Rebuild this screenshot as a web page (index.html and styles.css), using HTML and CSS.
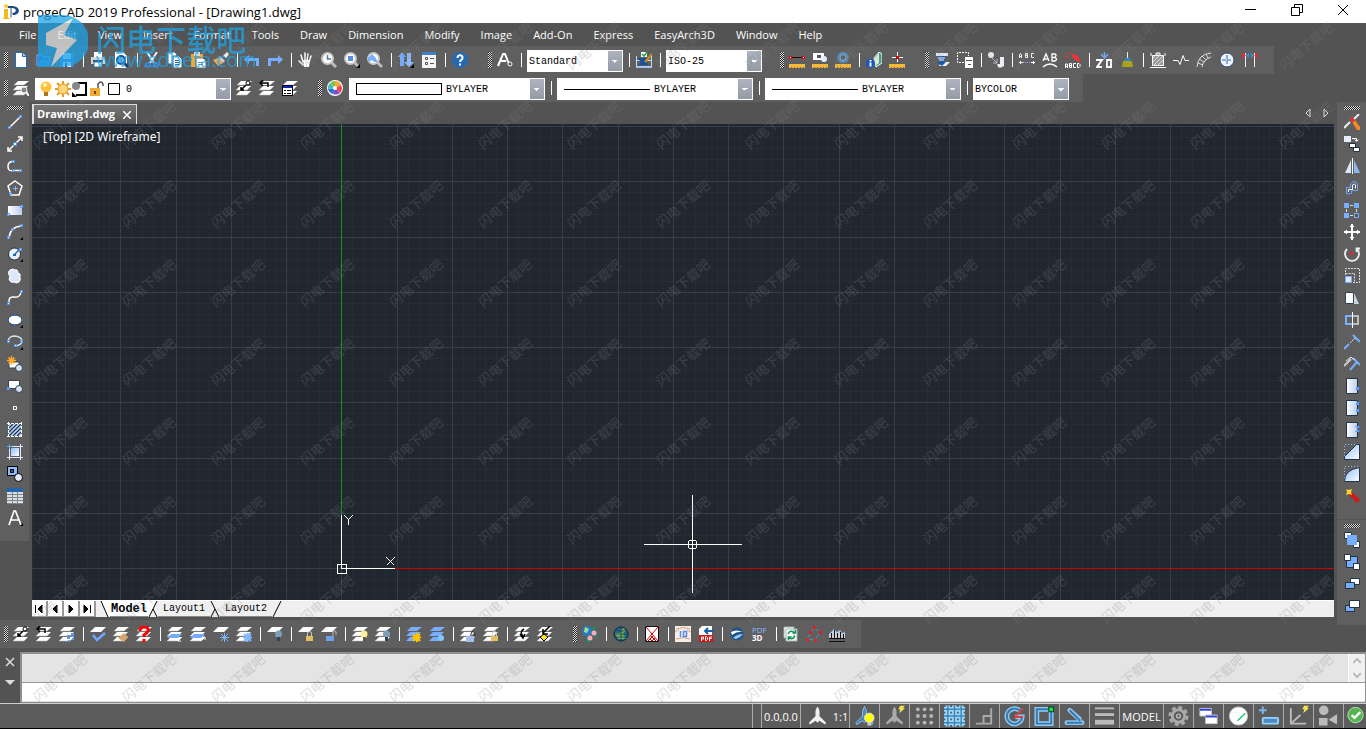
FILE: index.html
```html
<!DOCTYPE html>
<html lang="en">
<head>
  <meta charset="UTF-8">
  <meta name="viewport" content="width=device-width, initial-scale=1.0">
  <title>progeCAD 2019 Professional</title>
  <link rel="stylesheet" href="styles.css">
</head>
<body>
  <!-- Shared icon parts -->
  <svg class="sprite" aria-hidden="true">
    <defs>
      <linearGradient id="fade" x1="0" y1="0" x2="1" y2="1"><stop offset="0" stop-color="#8fbcff"/><stop offset="1" stop-color="#fff"/></linearGradient>
      <linearGradient id="pale" x1="0" y1="0" x2="1" y2="0"><stop offset="0" stop-color="#fff"/><stop offset="1" stop-color="#b9cdf0"/></linearGradient>
    </defs>
    <symbol id="layers" viewBox="0 0 16 16"><path d="M5 1h11l-5 4H1zM4 6h11l-4 4H0zM4 11h11l-4 4H0z" fill="#fff"/><path d="M1 5h10M0 10h11M0 15h11" fill="none" stroke="#bbb" stroke-width=".6"/></symbol>
    <symbol id="layer" viewBox="0 0 16 16"><path d="M5 1h11l-5 5H0z" fill="#fff"/></symbol>
    <symbol id="bulb" viewBox="0 0 16 16"><circle cx="11.500" cy="8" r="3.500" fill="#7c9fb8"/><path d="M10 11h3v4h-3z" fill="#345"/></symbol>
    <symbol id="lock" viewBox="0 0 16 16"><path d="M9.500 10V7.500a2 2 0 0 1 4 0V10" fill="none" stroke="#ccc"/><path d="M8 10h7v5H8z" fill="#e5bd62"/></symbol>
    <symbol id="ruler" viewBox="0 0 16 16"><path d="M0 12h16v4H0z" fill="#f6b838"/><path d="M2.500 15v1M5.500 15v1M8.500 15v1M11.500 15v1M14.500 15v1" stroke="#765"/></symbol>
    <symbol id="person" viewBox="0 0 22 22"><path d="M11 1q3 4 2 10l7 7-1 2-6-4-2 2-2-2-6 4-1-2 7-7Q8 5 11 1z"/></symbol>
    <symbol id="zoomglass" viewBox="0 0 16 16"><path d="M10 10l5 5" stroke="#bbb" stroke-width="3"/><circle cx="6.500" cy="6.500" r="5.500" fill="#fff" stroke="#c8c8c8" stroke-width="2"/></symbol>
    <symbol id="bolt" viewBox="0 0 22 22"><path d="M17 0h5l-2 3h2l-6 5 1-4h-2z" fill="#f5e14b"/></symbol>
  </svg>

  <header class="titlebar">
    <svg class="app-icon" viewBox="0 0 16 16"><path d="M4 2h5c9 0 9 9 1 9l-1-2c5 0 5-5 0-5H5z" fill="#1f4a8a"/><path d="M7 4v10l2-1V4z" fill="#9ab"/><circle cx="3" cy="2" r="2" fill="#fc3"/><path d="M1 5h4v9h2v1H0v-1h1z" fill="#f2bb1d"/></svg>
    <h1>progeCAD 2019 Professional - [Drawing1.dwg]</h1>
    <button class="win" title="Minimize"><svg viewBox="0 0 12 12"><path d="M0 5.500h11"/></svg></button>
    <button class="win" title="Restore"><svg viewBox="0 0 12 12"><path d="M.5 3.500h8v8h-8zM3.500 3V.5h8v8H9"/></svg></button>
    <button class="win" title="Close"><svg viewBox="0 0 12 12"><path d="M1 1l10 10M11 1L1 11"/></svg></button>
  </header>

  <nav class="menubar">
    <a href="#">File</a><a href="#">Edit</a><a href="#">View</a><a href="#">Insert</a><a href="#">Format</a><a href="#">Tools</a><a href="#">Draw</a><a href="#">Dimension</a><a href="#">Modify</a><a href="#">Image</a><a href="#">Add-On</a><a href="#">Express</a><a href="#">EasyArch3D</a><a href="#">Window</a><a href="#">Help</a>
  </nav>

  <div class="toolrow">
    <!-- Standard -->
    <div class="toolbar">
      <button title="New"><svg viewBox="0 0 16 16"><path d="M2.500.5h7l4 4v11h-11z" fill="#fff" stroke="#1e6bc0"/><path d="M9.500.5v4h4" fill="#9cf" stroke="#1e6bc0"/></svg></button>
      <button title="Open"><svg viewBox="0 0 16 16"><path d="M1 14V3h4l2 2h6v3" fill="#1e5fae" stroke="#7db4ff"/><path d="M4 8h12l-3 6H1z" fill="#3d86d9"/></svg></button>
      <button title="Save"><svg viewBox="0 0 16 16"><path d="M1 1h14v14H1z" fill="#3e83d8"/><path d="M4 1h8v6H4z" fill="#d9ebff"/><path d="M4 10h8v5H4z" fill="#fff"/><path d="M6 11h2v4H6z" fill="#246"/></svg></button>
      <i class="sep"></i>
      <button title="Print"><svg viewBox="0 0 16 16"><path d="M4 0h8v5H4z" fill="#fff"/><path d="M1 5h14v7H1z" fill="#d6d6d6"/><path d="M3 8h10v2H3z" fill="#235a99"/><path d="M4 10h8v5H4z" fill="#fff" stroke="#379"/></svg></button>
      <button title="Print Preview"><svg viewBox="0 0 16 16"><path d="M2 0h8l4 4v12H2z" fill="#fff"/><path d="M10 10l5 5" stroke="#123f75" stroke-width="3"/><circle cx="8" cy="8" r="4" fill="#69adf0" stroke="#1a528f" stroke-width="2"/></svg></button>
      <i class="sep"></i>
      <button title="Cut"><svg viewBox="0 0 16 16"><path d="M3 0l7 11M13 0L6 11" stroke="#e8f2ff" stroke-width="2"/><circle cx="4" cy="13" r="2" fill="none" stroke="#3e86d8" stroke-width="2"/><circle cx="12" cy="13" r="2" fill="none" stroke="#3e86d8" stroke-width="2"/></svg></button>
      <button title="Copy"><svg viewBox="0 0 16 16"><path d="M1 0h7l2 3v9H1z" fill="#fff" stroke="#368"/><path d="M6 4h6l3 3v9H6z" fill="#fff" stroke="#368"/><path d="M8 8.500h4M8 10.500h5M8 12.500h5" stroke="#368"/></svg></button>
      <button title="Paste"><svg viewBox="0 0 16 16"><path d="M1 2h12v13H1z" fill="#f3a931"/><path d="M4 0h6v4H4z" fill="#ddd"/><path d="M6 6h7l3 3v7H6z" fill="#fff" stroke="#678"/><path d="M8 10.500h5M8 12.500h5" stroke="#69b"/></svg></button>
      <button title="Match Properties"><svg viewBox="0 0 16 16"><path d="M10 4l4-4 2 2-3 4z" fill="#fff"/><path d="M7 4l5 5-2 2-5-5z" fill="#ddd"/><path d="M5 6l5 5-5 3-5-6z" fill="#ecae5b"/></svg></button>
      <i class="sep"></i>
      <button title="Undo"><svg viewBox="0 0 16 16"><path d="M5 3v3h10v8h-3V9H5v3L0 7.500z" fill="#76adff"/></svg></button>
      <button title="Redo"><svg viewBox="0 0 16 16"><path d="M11 3v3H1v8h3V9h7v3l5-4.500z" fill="#76adff"/></svg></button>
      <i class="sep"></i>
      <button title="Pan"><svg viewBox="0 0 16 16"><path d="M5 13L1 9M5 10L3 3M7 9V1M9 9l1-7M11 10l2-6" fill="none" stroke="#fff" stroke-width="1.500" stroke-linecap="round"/><path d="M5 8h7l-1 7H6z" fill="#fff"/></svg></button>
      <button title="Zoom Realtime"><svg viewBox="0 0 16 16"><use href="#zoomglass"/><path d="M6.500 3v4H10" fill="none" stroke="#579" stroke-width="1.500"/></svg></button>
      <button title="Zoom Window"><svg viewBox="0 0 16 16"><use href="#zoomglass"/><path d="M4 4h5v5H4z" fill="#4f8fe6"/><path d="M12 16h4v-4z" fill="#000"/></svg></button>
      <button title="Zoom Previous"><svg viewBox="0 0 16 16"><use href="#zoomglass"/><path d="M1 10V6l4-4 3 3 3 5H7L5 8z" fill="#76adff"/></svg></button>
      <i class="sep"></i>
      <button title="Named Views"><svg viewBox="0 0 16 16"><path d="M0 5l4-5 4 5H6v9H2V5z" fill="#76adff"/><path d="M9 1h4v9h3l-5 5-5-5h3z" fill="#8dbaff"/><path d="M12 16h4v-4z" fill="#000"/></svg></button>
      <button title="Properties"><svg viewBox="0 0 16 16"><path d="M1 0h14v16H1z" fill="#f4f4f4"/><path d="M1 0h14v3H1z" fill="#3f7fc6"/><path d="M4.500 5.500h2v2h-2zM4.500 10.500h2v2h-2zM9 6.500h4M9 11.500h4" fill="none" stroke="#555"/></svg></button>
      <i class="sep"></i>
      <button title="Help"><svg viewBox="0 0 16 16"><circle cx="8" cy="8" r="8" fill="#2468b4"/><path d="M5.500 6c0-4 5.500-3.500 5 0 0 2-2.500 1.800-2.500 4M8 11.500v2" fill="none" stroke="#fff" stroke-width="2"/></svg></button>
    </div>
    <!-- Styles -->
    <div class="toolbar">
      <button title="Text Style"><svg viewBox="0 0 16 16"><path d="M1 14L6 2h2l4 10M3 9h6" fill="none" stroke="#fff" stroke-width="2"/><circle cx="13" cy="12" r="2" fill="#555" stroke="#fff"/></svg></button>
      <i class="sep"></i>
      <div class="combo small"><select aria-label="Text style"><option>Standard</option></select></div>
      <i class="sep"></i>
      <button title="Dimension Style"><svg viewBox="0 0 16 16"><path d="M5 0h6v5H5z" fill="#fff"/><path d="M6 2l2 2 3-4" fill="none" stroke="#1ca34a" stroke-width="1.500"/><path d="M.5 4v11M15.500 4v11M0 8.500h16" stroke="#cde"/><path d="M1 6h11l-2 4 3 3H2l3-3z" fill="#19519a"/><path d="M9 10l7-8" stroke="#d08d15" stroke-width="2"/><path d="M0 15h16" stroke="#a8c7ee" stroke-width="2"/></svg></button>
      <i class="sep"></i>
      <div class="combo small"><select aria-label="Dimension style"><option>ISO-25</option></select></div>
    </div>
    <!-- Inquiry -->
    <div class="toolbar">
      <button title="Distance"><svg viewBox="0 0 16 16"><use href="#ruler"/><path d="M3 5.500h10" stroke="#300"/><path d="M.5 4.500h2v2h-2zM13.500 4.500h2v2h-2z" fill="#fff" stroke="#d00"/></svg></button>
      <button title="Area"><svg viewBox="0 0 16 16"><use href="#ruler"/><path d="M1 1h11v7H1z" fill="#fff"/><path d="M5 3h4v3H5z" fill="#555"/><circle cx="12" cy="7" r="3" fill="#e3ecfb"/></svg></button>
      <button title="Mass Properties"><svg viewBox="0 0 16 16"><use href="#ruler"/><circle cx="8" cy="5.500" r="4.500" fill="none" stroke="#528cbb" stroke-width="2.500"/><circle cx="8" cy="5.500" r="3" fill="none" stroke="#aad1ef" stroke-width=".7"/></svg></button>
      <i class="sep"></i>
      <button title="Entity Info"><svg viewBox="0 0 16 16"><path d="M8 6l5-6 3 2v9l-6 4z" fill="#5a9977" stroke="#dff"/><path d="M9 6l4-5v10l-4 3z" fill="#d7e9dc"/><circle cx="4.500" cy="11.500" r="4.500" fill="#1b58b9"/><path d="M4.500 8v1.500M4.500 10.500v4" stroke="#fff" stroke-width="2"/></svg></button>
      <button title="Locate Point"><svg viewBox="0 0 16 16"><use href="#ruler"/><path d="M8.500 0v10M3 5.500h11" stroke="#fff"/><path d="M7 4h3v3H7z" fill="#d00"/></svg></button>
    </div>
    <!-- Express -->
    <div class="toolbar">
      <button title="Layer Manager"><svg viewBox="0 0 16 16"><path d="M2 1h12v3H2zM7 10h9l-4 4H5z" fill="#e8f1ff"/><path d="M4 4h8l-2 6h2l-4 4-5-4h3z" fill="#195ba9"/><path d="M4 6h7M5 8h5" stroke="#fff"/></svg></button>
      <button title="Selection Filter"><svg viewBox="0 0 16 16"><path d="M7 10.500H.5v-10h11V4" fill="none" stroke="#fff" stroke-dasharray="2 1"/><path d="M8 5h8v11H8z" fill="#fff"/><path d="M9 8.500h6M11 12.500h3" stroke="#555"/></svg></button>
      <i class="sep"></i>
      <button title="Trace"><svg viewBox="0 0 16 16"><circle cx="3" cy="3" r="3" fill="#e4e4e4"/><path d="M4 6l5 5M9 7v4H5" fill="none" stroke="#bbb"/><path d="M12 5h4v9q-4 3-6 1l-1-3h3z" fill="#e9edf4"/></svg></button>
      <i class="sep"></i>
      <button title="Text Fit"><svg viewBox="0 0 16 16"><path d="M.5 6V3l1-1.500 1 1.500v3M.5 4.500h2M6.500 1.500v4h2v-4zM6.500 3.500h2M15 1.500h-2.500v4H15" fill="none" stroke="#fff"/><path d="M4 10.500h8" stroke="#7fb2ff" stroke-dasharray="1 1"/><path d="M0 10.500h4M1.500 9v3M12 10.500h4M14.500 9v3" stroke="#fff"/></svg></button>
      <button title="Arc Text"><svg viewBox="0 0 16 16"><path d="M1 9l3-7 3 7M2 7h4M10 2v7h3q3-2 0-3.500Q15 2 13 2zM10 5.500h3" fill="none" stroke="#fff" stroke-width="1.300"/><path d="M1 15q7-6 14 0" fill="none" stroke="#fff" stroke-width="1.500"/></svg></button>
      <button title="Explode Text"><svg viewBox="0 0 16 16"><path d="M7 2l5 1 4 6-3 1-6-5z" fill="#e33"/><path d="M1 1l3 2M0 5h4M6 0v2" stroke="#e33"/><path d="M.5 16v-4h2v4M.5 14.500h2M4.500 11.500v4h2v-4zM4.500 13.500h2M11 11.500H8.500v4H11M12.500 11.500v4h1.500l1-1v-2l-1-1z" fill="none" stroke="#fff"/></svg></button>
      <i class="sep"></i>
      <button title="Flatten"><svg viewBox="0 0 16 16"><path d="M0 8h6l-5 7h5M11 8h4v7h-4V8z" fill="none" stroke="#fff" stroke-width="2"/><path d="M8.500 0v6M5 2l3.500 4L12 2" fill="none" stroke="#72a7ee" stroke-width="1.500"/></svg></button>
      <button title="Clean"><svg viewBox="0 0 16 16"><path d="M8.500 0v6" stroke="#eee"/><path d="M6 6h5l1 4H5z" fill="#2d88ca"/><path d="M4 9h9l1 6H3z" fill="#a9a31b"/></svg></button>
      <i class="sep"></i>
      <button title="Super Hatch"><svg viewBox="0 0 16 16"><path d="M2.500 3.500h11v10h-11zM6 3V1h4v2" fill="#999" stroke="#fff"/><path d="M3 6l3-3M3 10l7-7M3 14L13 4M7 14l6-6" stroke="#ddd"/><path d="M0 15.500h16M1 1v3M15 1v3" stroke="#fff"/></svg></button>
      <button title="Break Line"><svg viewBox="0 0 16 16"><path d="M0 8.500h5l2 4 3-9 2 5h4" fill="none" stroke="#fff"/></svg></button>
      <button title="Insulation"><svg viewBox="0 0 16 16"><path d="M1 15Q2 2 15 1M6 15Q7 8 15 5M2 11l5 2M3 7l5 3M6 4l4 4M10 2l2 4" fill="none" stroke="#e6e6e6"/></svg></button>
      <button title="Center Mark"><svg viewBox="0 0 16 16"><circle cx="8" cy="8" r="7" fill="#eaf3ff" stroke="#346"/><path d="M8 3v10M3 8h10" stroke="#346aa8" stroke-dasharray="4 1"/></svg></button>
      <button title="Dimension Break"><svg viewBox="0 0 16 16"><path d="M3.500 1v14M12.500 1v14" stroke="#eee"/><path d="M0 1l4 2.500L0 6zM16 1l-4 2.500L16 6z" fill="#f22"/><path d="M4 3.500L7 1v5zM12 3.500L9 1v5z" fill="#39d"/></svg></button>
    </div>
  </div>

  <div class="toolrow">
    <!-- Layers -->
    <div class="toolbar">
      <button title="Explore Layers"><svg viewBox="0 0 16 16"><use href="#layers"/><circle cx="11" cy="10" r="3" fill="#888" stroke="#eee"/><path d="M13 12l3 4" stroke="#fff" stroke-width="2"/></svg></button>
      <div class="combo large">
        <span class="layer-state">
          <svg viewBox="0 0 16 16"><circle cx="8" cy="6" r="5.500" fill="#ffc33f"/><circle cx="7" cy="4" r="2" fill="#fff3b8"/><path d="M6 11h4v4H6z" fill="#a9781f"/></svg>
          <svg viewBox="0 0 16 16"><path d="M8 0v16M0 8h16M2 2l12 12M14 2L2 14" stroke="#e79b27" stroke-width="2"/><circle cx="8" cy="8" r="5" fill="#ffd57b" stroke="#e79b27"/></svg>
          <svg viewBox="0 0 16 16"><path d="M5 2h9v12H4" fill="#fff" stroke="#000" stroke-width="2"/><circle cx="4" cy="5" r="4" fill="#888"/><path d="M0 16v-5l5 5z" fill="#000"/></svg>
          <svg viewBox="0 0 16 16"><path d="M9 8V3q3-4 5 0v2" fill="none" stroke="#555" stroke-width="1.500"/><path d="M1 7h10v8H1z" fill="#eeae35"/><path d="M6 10v3" stroke="#75480a" stroke-width="2"/></svg>
          <svg viewBox="0 0 16 16"><path d="M2.500 2.500h11v11h-11z" fill="#fff" stroke="#000"/></svg>
        </span>
        <select aria-label="Layer"><option>0</option></select>
      </div>
      <button title="Set Layer by Entity"><svg viewBox="0 0 16 16"><use href="#layers"/><path d="M5 10l5-5M5 7v3h3" fill="none" stroke="#000" stroke-width="1.500"/><circle cx="12" cy="3" r="2" fill="#fff" stroke="#000"/></svg></button>
      <button title="Layer Previous"><svg viewBox="0 0 16 16"><use href="#layers"/><path d="M1 3h8v4M4 0L1 3l3 3" fill="none" stroke="#000" stroke-width="1.500"/></svg></button>
      <button title="Layer States"><svg viewBox="0 0 16 16"><use href="#layers"/><path d="M.5 5.500h10v10H.5z" fill="#fff" stroke="#000"/><path d="M1 6h9v2H1z" fill="#12b"/><path d="M2 10.500h2M5 10.500h4M2 13.500h2M5 13.500h4" stroke="#000"/></svg></button>
    </div>
    <!-- Entity properties -->
    <div class="toolbar">
      <button title="Color"><svg viewBox="0 0 16 16"><circle cx="8" cy="8" r="8" fill="#fff"/><path d="M8 8V1a7 7 0 0 1 6 4z" fill="#f6a53d"/><path d="M8 8l6-3a7 7 0 0 1-1 8z" fill="#e84a4d"/><path d="M8 8l5 5a7 7 0 0 1-7 1z" fill="#864ac2"/><path d="M8 8l-2 6a7 7 0 0 1-5-5z" fill="#2f71da"/><path d="M8 8L1 9a7 7 0 0 1 2-6z" fill="#42c2ae"/><path d="M8 8L3 3a7 7 0 0 1 5-2z" fill="#80c540"/><circle cx="8" cy="8" r="2" fill="#fff"/></svg></button>
      <div class="combo large"><span class="swatch"></span><select aria-label="Color"><option>BYLAYER</option></select></div>
      <i class="sep"></i>
      <div class="combo large"><span class="line"></span><select aria-label="Linetype"><option>BYLAYER</option></select></div>
      <i class="sep"></i>
      <div class="combo large"><span class="line"></span><select aria-label="Lineweight"><option>BYLAYER</option></select></div>
      <i class="sep"></i>
      <div class="combo small"><select aria-label="Print style"><option>BYCOLOR</option></select></div>
    </div>
  </div>

  <main class="workspace">
    <div class="side">
      <!-- Draw -->
      <div class="toolbar vertical">
        <button title="Line"><svg viewBox="0 0 16 16"><path d="M2 14L14 2" stroke="#fff" stroke-width="1.500"/><path d="M1.500 12.500h2v2h-2zM12.500 1.500h2v2h-2z" class="node"/></svg></button>
        <button title="Construction Line"><svg viewBox="0 0 16 16"><path d="M1 15L15 1M1 11v4h4M11 1h4v4" fill="none" stroke="#fff" stroke-width="1.500"/><path d="M6.500 6.500h3v3h-3z" class="node"/></svg></button>
        <button title="Polyline"><svg viewBox="0 0 16 16"><path d="M6 3.500q-5 0-5 5t5 4h7" fill="none" stroke="#fff" stroke-width="1.500"/><path d="M5.500 2.500h2v2h-2zM5.500 11.500h2v2h-2zM12.500 11.500h2v2h-2z" class="node"/></svg></button>
        <button title="Polygon"><svg viewBox="0 0 16 16"><path d="M8 1l7 5-3 9H4L1 6z" fill="none" stroke="#fff" stroke-width="1.500"/><path d="M8.500 6v5M6 8.500h5" stroke="#7db2ff"/><path d="M2.500 12.500h2v2h-2z" class="node"/></svg></button>
        <button title="Rectangle"><svg viewBox="0 0 16 16"><path d="M1 4h14v9H1z" fill="url(#pale)"/><path d="M.5 11.500h2v2h-2zM13.500 3.500h2v2h-2z" class="node"/></svg></button>
        <button title="Arc"><svg viewBox="0 0 16 16"><path d="M2 14Q3 3 14 2" fill="none" stroke="#fff" stroke-width="1.500"/><path d="M.5 12.500h2v2h-2zM4.500 4.500h2v2h-2zM13.500.5h2v2h-2z" class="node"/><path d="M13 16h3v-3z"/></svg></button>
        <button title="Circle"><svg viewBox="0 0 16 16"><circle cx="7.500" cy="8" r="6" fill="#eaf1fb" stroke="#234"/><path d="M7 9l5-5" stroke="#2468b4" stroke-width="1.500"/><path d="M6 8h3v2H6z" fill="#2468b4"/><path d="M12.500 2.500h2v2h-2z" class="node"/><path d="M13 16h3v-3z"/></svg></button>
        <button title="Revision Cloud"><svg viewBox="0 0 16 16"><path d="M3 2q3-2 5 0 3-1 3 3 3 0 2 4 1 3-1 5-3 2-5 0-3 1-4-1-2-2 0-4Q0 4 3 2z" fill="#dce8fa" stroke="#fff"/></svg></button>
        <button title="Spline"><svg viewBox="0 0 16 16"><path d="M2 14q-1-8 5-7t7-5" fill="none" stroke="#fff" stroke-width="1.500"/><path d="M.5 12.500h2v2h-2zM13.500.5h2v2h-2z" class="node"/></svg></button>
        <button title="Ellipse"><svg viewBox="0 0 16 16"><ellipse cx="8" cy="8" rx="7" ry="5" fill="#fff" stroke="#234"/><path d="M0 7h2v2H0zM14 7h2v2h-2zM7 2h2v2H7zM7 12h2v2H7z" fill="#2f76c9"/><path d="M13 16h3v-3z"/></svg></button>
        <button title="Elliptical Arc"><svg viewBox="0 0 16 16"><path d="M1 7q1-5 7-5 7 1 7 5 0 4-7 5" fill="none" stroke="#d7dee8" stroke-width="1.500"/><path d="M.5 6.500h2v2h-2zM13.500 6.500h2v2h-2zM7.500 10.500h2v2h-2z" class="node"/><path d="M13 16h3v-3z"/></svg></button>
        <button title="Make Block"><svg viewBox="0 0 16 16"><path d="M2 6h10v6H2z" fill="#fff" stroke="#345"/><circle cx="12" cy="12" r="3.500" fill="#d6e2f6" stroke="#345"/><path d="M4.500 0v9M0 4.500h9M1.500 1.500l6 6M7.500 1.500l-6 6" stroke="#ffac2e" stroke-width="1.500"/></svg></button>
        <button title="Insert Block"><svg viewBox="0 0 16 16"><path d="M1.500 2.500h11v8h-11z" fill="#fff" stroke="#345"/><circle cx="12" cy="11" r="3.500" fill="#d6e2f6" stroke="#345"/><path d="M0 9h3v3H0z" fill="#5c9bea"/></svg></button>
        <button title="Point"><svg viewBox="0 0 16 16"><path d="M6.500 6.500h3v3h-3z" fill="#666" stroke="#fff"/></svg></button>
        <button title="Hatch"><svg viewBox="0 0 16 16"><path d="M2 2h12v12H2z" fill="#b9d5ff"/><path d="M2 6l4-4M2 10l8-8M2 14L14 2M6 14l8-8M10 14l4-4" stroke="#234" stroke-width="1.200"/><path d="M1.500 0v16M14.500 0v16M0 1.500h16M0 14.500h16" stroke="#fff" stroke-dasharray="3 1"/></svg></button>
        <button title="Boundary"><svg viewBox="0 0 16 16"><path d="M2.500 0v16M13.500 0v16M0 2.500h16M0 13.500h16" stroke="#dfeaff"/><path d="M4 4h8v8H4z" fill="url(#fade)"/><path d="M0 2.500h5M2.500 0v5" fill="none" stroke="#66a7ff"/></svg></button>
        <button title="Region"><svg viewBox="0 0 16 16"><path d="M.5.5h10v9H.5z" fill="#8dbbff" stroke="#000"/><circle cx="11.500" cy="11.500" r="4" fill="#dfeaff" stroke="#000"/><path d="M3.500 3.500h3v3h-3z" fill="#555" stroke="#000"/></svg></button>
        <button title="Table"><svg viewBox="0 0 16 16"><path d="M0 0h16v16H0z" fill="#ddd"/><path d="M0 0h16v4H0z" fill="#2365ac"/><path d="M0 6.500h16M0 9.500h16M0 12.500h16M5.500 4v12M10.500 4v12M0 15.500h16" stroke="#7b8794"/></svg></button>
        <button title="Text"><svg viewBox="0 0 16 16"><path d="M2 15L7 1h1.500L14 15M4 10h8" fill="none" stroke="#fff" stroke-width="1.700"/><path d="M13 16h3v-3z"/></svg></button>
      </div>
    </div>

    <section class="document">
      <div class="doctabs">
        <div class="doctab"><span>Drawing1.dwg</span><button title="Close drawing"><svg viewBox="0 0 8 8"><path d="M0 0l8 8M8 0L0 8" stroke="#fff" stroke-width="1.500"/></svg></button></div>
        <div class="tabscroll">
          <button title="Scroll left"><svg viewBox="0 0 6 10"><path d="M5 1v8L1 5z"/></svg></button>
          <button title="Scroll right"><svg viewBox="0 0 6 10"><path d="M1 1v8l4-4z"/></svg></button>
        </div>
      </div>

      <div class="canvas">
        <svg class="drawing">
          <defs>
            <pattern id="grid" x="88" y="2" width="221" height="221" patternUnits="userSpaceOnUse">
              <path class="minor" d="M11.500 0v221M22.500 0v221M33.500 0v221M44.500 0v221M67.500 0v221M78.500 0v221M89.500 0v221M100.500 0v221M122.500 0v221M133.500 0v221M144.500 0v221M155.500 0v221M177.500 0v221M188.500 0v221M199.500 0v221M210.500 0v221"/>
              <path class="minor" d="M0 11.500h221M0 22.500h221M0 33.500h221M0 44.500h221M0 66.500h221M0 77.500h221M0 88.500h221M0 100.500h221M0 122.500h221M0 133.500h221M0 144.500h221M0 155.500h221M0 177.500h221M0 188.500h221M0 199.500h221M0 210.500h221"/>
              <path class="major" d="M.5 0v221M56.500 0v221M111.500 0v221M166.500 0v221M0 .5h221M0 55.500h221M0 111.500h221M0 166.500h221"/>
            </pattern>
          </defs>
          <rect width="100%" height="100%" fill="url(#grid)"/>
          <!-- Axes and UCS icon -->
          <line class="axis-y" x1="309.500" y1="0" x2="309.500" y2="391"/>
          <line class="axis-x" x1="363" y1="444.500" x2="100%" y2="444.500"/>
          <path class="ucs" d="M309.500 391v53.500H363M305.500 440.500h9v9h-9zM312.500 391.500l4 4 4-4M316.500 395.500v5M354.500 433.500l8 8M362.500 433.500l-8 8"/>
          <!-- Cursor -->
          <path class="ucs" d="M612 420.500h98M660.500 371v98M657.500 416.500h6l1 1v6l-1 1h-6l-1-1v-6z"/>
        </svg>
        <span class="viewlabel">[Top] [2D Wireframe]</span>
      </div>

      <div class="layouts">
        <div class="layoutnav">
          <button title="First"><svg viewBox="0 0 10 10"><path d="M1.500 1v8M8 1v8L4 5z"/></svg></button>
          <button title="Previous"><svg viewBox="0 0 10 10"><path d="M7 1v8L3 5z"/></svg></button>
          <button title="Next"><svg viewBox="0 0 10 10"><path d="M3 1v8l4-4z"/></svg></button>
          <button title="Last"><svg viewBox="0 0 10 10"><path d="M8.500 1v8M2 1v8l4-4z"/></svg></button>
        </div>
        <svg class="slant" viewBox="0 0 10 16"><path d="M1 0h9v16H8z" fill="#fff" stroke="none"/><path d="M1 0l7 16"/></svg>
        <button class="layout active">Model</button>
        <svg class="slant" viewBox="0 0 10 16"><path d="M0 0h9L1 16H0z" fill="#fff" stroke="none"/><path d="M9 0L1 16M5 8l4 8"/></svg>
        <button class="layout">Layout1</button>
        <svg class="slant" viewBox="0 0 10 16"><path d="M1 0l8 16M5 8l-4 8"/></svg>
        <button class="layout">Layout2</button>
        <svg class="slant" viewBox="0 0 10 16"><path d="M9 0L1 16"/></svg>
      </div>
    </section>

    <div class="side right">
      <!-- Modify -->
      <div class="toolbar vertical">
        <button title="Erase"><svg viewBox="0 0 16 16"><path d="M0 14l6-6M10 5l5-5" stroke="#eee" stroke-width="2"/><path d="M8 8l3-2 5 7v3h-3z" fill="#f58a22"/><path d="M5 4l3-1 3 4-3 2z" fill="#d33"/></svg></button>
        <button title="Copy"><svg viewBox="0 0 16 16"><path d="M0 0h7v6H0z" fill="#e5efff"/><path d="M8 2.500h4.500V5M10.500 3.500l2 2 2-2" fill="none" stroke="#fff"/><path d="M5.500 7.500h6v4h-6zM9.500 11.500h6v4h-6z" fill="#fff" stroke="#234"/></svg></button>
        <button title="Mirror"><svg viewBox="0 0 16 16"><path d="M7 2v13H1z" fill="#dce8fb"/><path d="M10 2v13h6z" fill="#8db8f5"/><path d="M8.500 0v16" stroke="#fff"/></svg></button>
        <button title="Offset"><svg viewBox="0 0 16 16"><path d="M2.500 14V7.500h4V4q4-5 7 0v6.500h-6v3z" fill="none" stroke="#6aa6ff"/><path d="M4.500 12V9.500h4V5q2-2 3 0v3.500" fill="none" stroke="#fff"/></svg></button>
        <button title="Array"><svg viewBox="0 0 16 16"><path d="M0 1h5v5H0zM10 1h5v5h-5zM0 11h5v5H0z" fill="#78aeff"/><path d="M10.500 11.500h4v4h-4z" fill="#555" stroke="#78aeff"/><path d="M6 3.500h3M6 13.500h3M2.500 7v3M12.500 7v3" stroke="#ddd"/></svg></button>
        <button title="Move"><svg viewBox="0 0 16 16"><path d="M8 0v16M0 8h16" stroke="#fff" stroke-width="2"/><path d="M8 0l2.500 3h-5zM8 16l2.500-3h-5zM0 8l3-2.500v5zM16 8l-3-2.500v5z" fill="#fff"/></svg></button>
        <button title="Rotate"><svg viewBox="0 0 16 16"><path d="M3 3a7 7 0 1 0 10 0M12.500 6V2.500H16" fill="none" stroke="#eee" stroke-width="1.800"/><path d="M7.500 5v5M5 7.500h5" stroke="#e22"/></svg></button>
        <button title="Scale"><svg viewBox="0 0 16 16"><path d="M1.500 7V.5h14v14H9M1.500 5.500h9v9" fill="none" stroke="#ddd" stroke-dasharray="2 1"/><path d="M1.500 8.500h6v6h-6z" fill="#dce9ff" stroke="#78aeff"/></svg></button>
        <button title="Stretch"><svg viewBox="0 0 16 16"><path d="M1.500 2.500h8v11h-8z" fill="#fff" stroke="#345"/><path d="M10 3l5 11h-5z" fill="#cbd3df"/></svg></button>
        <button title="Trim"><svg viewBox="0 0 16 16"><path d="M8 4H2v8h6" fill="none" stroke="#78aeff" stroke-width="2"/><path d="M9 4h5v8H9" fill="none" stroke="#bbb" stroke-width="2"/><path d="M8.500 0v16" stroke="#fff"/></svg></button>
        <button title="Extend"><svg viewBox="0 0 16 16"><path d="M0 15l5-5M9 1l7 7M11 4l1 1" stroke="#78aeff" stroke-width="2"/><path d="M6 9l5-5" stroke="#eee" stroke-dasharray="2 1"/></svg></button>
        <button title="Lengthen"><svg viewBox="0 0 16 16"><path d="M0 10l7-7" stroke="#ccc" stroke-width="2"/><path d="M6 14l7-8M9 2l7 7" stroke="#78aeff" stroke-width="2"/><path d="M2 5l5-4 3 3" fill="none" stroke="#eee"/></svg></button>
        <button title="Break at Point"><svg viewBox="0 0 16 16"><path d="M2.500.5h11v15h-11z" fill="url(#pale)" stroke="#234"/><path d="M12 9h3v3h-3z" fill="#589dff"/></svg></button>
        <button title="Break"><svg viewBox="0 0 16 16"><path d="M2.500.5h11v15h-11z" fill="url(#pale)" stroke="#234"/><path d="M12 2h3v3h-3zM12 9h3v3h-3z" fill="#589dff"/></svg></button>
        <button title="Join"><svg viewBox="0 0 16 16"><path d="M2.500.5h11v15h-11z" fill="url(#pale)" stroke="#234"/><path d="M11 4h5l-5 6h5z" fill="#589dff"/></svg></button>
        <button title="Chamfer"><svg viewBox="0 0 16 16"><path d="M.5 15V.5H15" fill="none" stroke="#8dbbff" stroke-dasharray="1 2"/><path d="M15.500.5v15H.5v-3l12-12z" fill="url(#fade)" stroke="#234"/></svg></button>
        <button title="Fillet"><svg viewBox="0 0 16 16"><path d="M.5 15V.5H15" fill="none" stroke="#8dbbff" stroke-dasharray="1 2"/><path d="M15.500 1.500v14H.5q0-12 15-14z" fill="url(#fade)" stroke="#234"/></svg></button>
        <button title="Explode"><svg viewBox="0 0 16 16"><path d="M5 7l3-3 8 8-3 3z" fill="#d51717"/><path d="M2 1l2 1 4-1-1 3 1 3-3-1-3 1 1-3z" fill="#ffd42a"/></svg></button>
      </div>
      <!-- Draw order -->
      <div class="toolbar vertical">
        <button title="Bring to Front"><svg viewBox="0 0 16 16"><path d="M.5.5h7v6h-7zM9.500 9.500h6v6h-6z" fill="#fff" stroke="#234"/><path d="M3 3h10v10H3z" fill="#78aeff"/></svg></button>
        <button title="Send to Back"><svg viewBox="0 0 16 16"><path d="M2.500 2.500h11v11h-11z" fill="#78aeff" stroke="#234"/><path d="M.5.5h6v6h-6zM9.500 9.500h6v6h-6z" fill="#fff" stroke="#234"/></svg></button>
        <button title="Bring Above"><svg viewBox="0 0 16 16"><path d="M6.500 2.500h9v6h-9z" fill="#fff" stroke="#234"/><path d="M1.500 6.500h9v6h-9z" fill="#78aeff" stroke="#234"/></svg></button>
        <button title="Send Under"><svg viewBox="0 0 16 16"><path d="M1.500 7.500h9v6h-9z" fill="#78aeff" stroke="#234"/><path d="M5.500 2.500h10v7h-10z" fill="#fff" stroke="#234"/></svg></button>
      </div>
    </div>
  </main>

  <div class="toolrow">
    <!-- Layer tools -->
    <div class="toolbar">
      <button title="Set Layer"><svg viewBox="0 0 16 16"><use href="#layers"/><path d="M5 10l5-5M5 7v3h3" fill="none" stroke="#000" stroke-width="1.500"/><circle cx="12" cy="3" r="2" fill="#fff" stroke="#000"/></svg></button>
      <button title="Layer Previous"><svg viewBox="0 0 16 16"><use href="#layers"/><path d="M1 3h8v4M4 0L1 3l3 3" fill="none" stroke="#000" stroke-width="1.500"/></svg></button>
      <button title="Layer Walk"><svg viewBox="0 0 16 16"><use href="#layers"/><path d="M8 9h3v4H8zM12 7h3v4h-3zM9 14h2v2H9zM13 12h2v2h-2z" fill="#5c96e5"/></svg></button>
      <i class="sep"></i>
      <button title="Make Current"><svg viewBox="0 0 16 16"><use href="#layer"/><path d="M3 9l4 5 8-7" fill="none" stroke="#70a8ff" stroke-width="2.500"/></svg></button>
      <button title="Layer Match"><svg viewBox="0 0 16 16"><use href="#layers"/><path d="M11 7l4 4-4 5-6-4z" fill="#d6a56d"/></svg></button>
      <button title="Identify Layer"><svg viewBox="0 0 16 16"><use href="#layers"/><path d="M4 5q0-4 4-4 5 0 4 4-1 2-4 4v2M8 13v3" fill="none" stroke="#f00" stroke-width="3"/></svg></button>
      <i class="sep"></i>
      <button title="Move to Layer"><svg viewBox="0 0 16 16"><use href="#layers"/><path d="M4 8h11l-4 4H0z" fill="#76acff"/><path d="M15 11l-4 4M11 12v3h3" fill="none" stroke="#fff"/></svg></button>
      <button title="Copy to Layer"><svg viewBox="0 0 16 16"><use href="#layers"/><path d="M4 8h11l-4 4H0z" fill="#76acff"/><path d="M11 15l4-4M12 11h3v3" fill="none" stroke="#fff"/></svg></button>
      <button title="Layer Freeze"><svg viewBox="0 0 16 16"><use href="#layer"/><path d="M11.500 7v9M7 11.500h9M8 8l7 7M15 8l-7 7" stroke="#82b5ff"/></svg></button>
      <button title="Thaw All"><svg viewBox="0 0 16 16"><use href="#layers"/><path d="M11.500 7v9M7 11.500h9M8 8l7 7M15 8l-7 7" stroke="#82baff" stroke-width="2"/></svg></button>
      <i class="sep"></i>
      <button title="Layer Off"><svg viewBox="0 0 16 16"><use href="#layer"/><use href="#bulb"/></svg></button>
      <i class="sep"></i>
      <button title="Layer Lock"><svg viewBox="0 0 16 16"><use href="#layer"/><use href="#lock"/></svg></button>
      <button title="Layer Unlock"><svg viewBox="0 0 16 16"><use href="#layer"/><path d="M12 10V6q2-3 3 0v3" fill="none" stroke="#bbb"/><path d="M5 10h8v5H5z" fill="#6f9fe4"/></svg></button>
      <i class="sep"></i>
      <button title="All Layers On"><svg viewBox="0 0 16 16"><use href="#layers"/><circle cx="12" cy="8" r="3.500" fill="#ffef95"/><path d="M11 11h3v4h-3z" fill="#654"/></svg></button>
      <button title="Layers Off"><svg viewBox="0 0 16 16"><use href="#layers"/><use href="#bulb"/></svg></button>
      <i class="sep"></i>
      <button title="Layer Isolate"><svg viewBox="0 0 16 16"><path d="M5 1h11l-5 4H1zM4 6h11l-4 4H0zM4 11h11l-4 4H0z" fill="#78aeff"/><path d="M11 7v9M6 11.500h9M7 8l7 7M14 8l-7 7" stroke="#ffc400" stroke-width="2"/></svg></button>
      <button title="Layer Unisolate"><svg viewBox="0 0 16 16"><path d="M5 1h11l-5 4H1zM4 6h11l-4 4H0zM4 11h11l-4 4H0z" fill="#78aeff"/><circle cx="12" cy="12" r="3" fill="#84c6ff"/></svg></button>
      <i class="sep"></i>
      <button title="Unlock All"><svg viewBox="0 0 16 16"><use href="#layers"/><path d="M11 10V7q2-3 4 0v3" fill="none" stroke="#333"/><path d="M6 10h8v6H6z" fill="#a4bfeb"/></svg></button>
      <button title="Lock All"><svg viewBox="0 0 16 16"><use href="#layers"/><use href="#lock"/></svg></button>
      <i class="sep"></i>
      <button title="Layer Merge"><svg viewBox="0 0 16 16"><use href="#layers"/><path d="M10 3q-5 3-1 7M6 8l3 4 2-4" fill="none" stroke="#000" stroke-width="1.500"/></svg></button>
      <button title="Layer Delete"><svg viewBox="0 0 16 16"><use href="#layers"/><path d="M13 0L6 7M6 3v5h5" fill="none" stroke="#000" stroke-width="1.500"/><path d="M7 8l4 3-4 4-4-4z" fill="#fd2" stroke="#000"/></svg></button>
    </div>
    <!-- Utilities -->
    <div class="toolbar">
      <button title="Map"><svg viewBox="0 0 16 16"><circle cx="5" cy="5" r="5" fill="#247ac5"/><path d="M3 1l4 2-2 4-3-1z" fill="#a5df83"/><path d="M9 2h3v6M12 10h4M5 11v4h3" fill="none" stroke="#1a8a78" stroke-width="2"/><circle cx="8" cy="12" r="2.500" fill="#f5aeb8"/><circle cx="12" cy="7" r="2.500" fill="#f5aeb8"/></svg></button>
      <i class="sep"></i>
      <button title="Globe"><svg viewBox="0 0 16 16"><circle cx="8" cy="8" r="7" fill="#1f6a86" stroke="#123"/><path d="M2 7h5l3-5 3 2-3 4 3 5H5z" fill="#71a855"/><path d="M8 1v14M1 8h14M3 4q5 3 10 0M3 12q5-3 10 0" fill="none" stroke="#153e5a" stroke-width=".7"/></svg></button>
      <i class="sep"></i>
      <button title="Wipeout"><svg viewBox="0 0 16 16"><path d="M1.500.5h13v15h-13z" fill="#fff" stroke="#111"/><path d="M2 1l6 7 6-7M2 15l6-7 6 7" fill="none" stroke="#d00"/><path d="M4 15l5-5M8 15l3-3M12 15l-5-5M8 15l-2-2" stroke="#d00"/></svg></button>
      <i class="sep"></i>
      <button title="Contours"><svg viewBox="0 0 16 16"><path d="M0 0h16v16H0z" fill="#f7eee8"/><path d="M1 3q7-3 14 0M1 13q7-3 14 0M0 6q3-2 4-2M12 4l4 2" fill="none" stroke="#dba08d"/><path d="M5.500 5v6M8.500 5.500h3v5h-3z" fill="none" stroke="#548ded" stroke-width="1.500"/></svg></button>
      <button title="PDF Import"><svg viewBox="0 0 16 16"><path d="M4 0h10v10H1V3z" fill="#fff"/><path d="M1 9h14v7H1z" fill="#d31717"/><path d="M7 5h9M10 2L7 5l3 3" fill="none" stroke="#1b61ae" stroke-width="2"/><path d="M3.500 15v-4h2v2h-2M7.500 10.500v4h1l1-1v-2l-1-1zM11.500 15v-4H14M11.500 12.500h2" fill="none" stroke="#fff"/></svg></button>
      <i class="sep"></i>
      <button title="Earth"><svg viewBox="0 0 16 16"><circle cx="8" cy="8" r="6.500" fill="#1c538b"/><path d="M2 6q5-3 12 0Q8 5 3 9z" fill="#fff"/><path d="M4 12q4-4 10-4-2 3-7 5z" fill="#9dc9ed"/></svg></button>
      <button class="pdf3d" title="PDF 3D"><span>PDF</span><b>3D</b></button>
      <i class="sep"></i>
      <button title="Update"><svg viewBox="0 0 16 16"><path d="M1 1h10v11H1zM3 3h11v12H3z" fill="#fff" stroke="#a3b2b1"/><path d="M5 8q2-5 7-1M12.500 4v3h-3M12 10q-3 5-7 1M5.500 14v-3h3" fill="none" stroke="#14935d" stroke-width="1.500"/></svg></button>
      <button title="Polyline Edit"><svg viewBox="0 0 16 16"><path d="M1 13L8 2l6 4-5 8z" fill="none" stroke="#568bb0"/><path d="M7.500.5h2v2h-2zM13.500 5.500h2v2h-2zM.5 12.500h2v2h-2zM8.500 13.500h2v2h-2zM3.500 5.500h2v2h-2z" fill="#555" stroke="#f11"/></svg></button>
      <button title="Profile"><svg viewBox="0 0 16 16"><path d="M0 12V8l5-5 3 3 3-2 2 3 3-1v6z" fill="#ccd"/><path d="M0 8l5-5 3 3 3-2 2 3 3-1" fill="none" stroke="#6594ba"/><path d="M2.500 7v6M5.500 4v9M8.500 7v6M11.500 6v7M14.500 8v5M0 12.500h16M0 15.500h16" stroke="#111"/></svg></button>
    </div>
  </div>

  <section class="command">
    <div class="command-tools">
      <button title="Close"><svg viewBox="0 0 10 10"><path d="M1 1l8 8M9 1L1 9" stroke="#ddd" stroke-width="1.500"/></svg></button>
      <button title="Options"><svg viewBox="0 0 10 10"><path d="M0 3h10L5 8z" fill="#ddd"/></svg></button>
    </div>
    <div class="command-box">
      <div class="history">
        <div class="scroller">
          <button title="Scroll up"><svg viewBox="0 0 8 8"><path d="M0 6l4-4 4 4"/></svg></button>
          <button title="Scroll down"><svg viewBox="0 0 8 8"><path d="M0 2l4 4 4-4"/></svg></button>
        </div>
      </div>
      <input type="text" aria-label="Command">
    </div>
  </section>

  <footer class="statusbar">
    <span class="cell narrow"></span>
    <span class="cell coords">0.0,0.0</span>
    <button class="cell scale"><svg viewBox="0 0 22 22"><use href="#person" fill="#eee"/></svg><span>1:1</span></button>
    <button class="cell" title="Annotation Visibility"><svg viewBox="0 0 22 22"><use href="#person" fill="#4f82b5" stroke="#8cc4ee"/><circle cx="16" cy="13" r="5" fill="#ff0" stroke="#dde"/><path d="M14 18h4v3h-4z" fill="#ccc"/></svg></button>
    <button class="cell" title="Annotation Autoscale"><svg viewBox="0 0 22 22"><use href="#person" fill="#aaa"/><use href="#bolt"/></svg></button>
    <button class="cell" title="Snap"><svg viewBox="0 0 22 22"><path d="M4 4h.1M11 4h.1M18 4h.1M4 11h.1M11 11h.1M18 11h.1M4 18h.1M11 18h.1M18 18h.1" stroke="#b5b5b5" stroke-width="4" stroke-linecap="round"/></svg></button>
    <button class="cell" title="Grid"><svg viewBox="0 0 22 22"><path d="M4 0v22M11 0v22M18 0v22M0 4h22M0 11h22M0 18h22" stroke="#9bd7fa" stroke-width="5"/><path d="M4 0v22M11 0v22M18 0v22M0 4h22M0 11h22M0 18h22" stroke="#3d86ba" stroke-width="1.500"/></svg></button>
    <button class="cell" title="Ortho"><svg viewBox="0 0 22 22"><path d="M2 19h16V3M10 19v-8h8" fill="none" stroke="#aaa" stroke-width="2"/></svg></button>
    <button class="cell" title="Polar"><svg viewBox="0 0 22 22"><path d="M16 5A8 8 0 1 0 19 12H12" fill="none" stroke="#8cc9f2" stroke-width="5"/><path d="M16 5A8 8 0 1 0 19 12H12" fill="none" stroke="#3977ad" stroke-width="2"/><path d="M20 12h-8l8-9" fill="none" stroke="#f33" stroke-width="1.500"/></svg></button>
    <button class="cell" title="Object Snap"><svg viewBox="0 0 22 22"><path d="M3 4h15v15H3z" fill="none" stroke="#8ccbf6" stroke-width="5"/><path d="M3 4h15v15H3z" fill="none" stroke="#3977ad" stroke-width="2"/><path d="M15.500 1.500h5v5h-5z" fill="#0e3" stroke="#123"/></svg></button>
    <button class="cell" title="Object Tracking"><svg viewBox="0 0 22 22"><path d="M6 5l10 9v4M3 18h16" fill="none" stroke="#89c5ec" stroke-width="5" stroke-linecap="round"/><path d="M6 5l11 11M3 18h16" fill="none" stroke="#3977ad" stroke-width="2"/></svg></button>
    <button class="cell" title="Lineweight"><svg viewBox="0 0 22 22"><path d="M1 3h20" stroke="#bbb" stroke-width="2"/><path d="M1 9.500h20" stroke="#bbb" stroke-width="3"/><path d="M1 17.500h20" stroke="#bbb" stroke-width="5"/></svg></button>
    <button class="cell model">MODEL</button>
    <button class="cell" title="Workspace"><svg viewBox="0 0 22 22"><circle cx="11" cy="11" r="9" fill="none" stroke="#aaa" stroke-width="3" stroke-dasharray="4 3"/><circle cx="11" cy="11" r="6.500" fill="none" stroke="#aaa" stroke-width="3"/><circle cx="11" cy="11" r="2" fill="none" stroke="#bbb" stroke-width="1.500"/></svg></button>
    <button class="cell" title="Windows"><svg viewBox="0 0 22 22"><path d="M2 3h12v8H2zM8 10h12v9H8z" fill="#fff" stroke="#ccc"/><path d="M2 4.500h12M8 11.500h12" stroke="#34d" stroke-width="2"/></svg></button>
    <button class="cell" title="Performance"><svg viewBox="0 0 22 22"><circle cx="11" cy="11" r="9.500" fill="#fff" stroke="#ccc"/><path d="M10 16l8-8" stroke="#1c7" stroke-width="1.500"/></svg></button>
    <button class="cell" title="Dynamic Input"><svg viewBox="0 0 22 22"><path d="M5 1v8M1 5h8" stroke="#7fb4e5" stroke-width="2"/><rect x="5" y="13" width="16" height="6" rx="1" fill="#4b8ac1" stroke="#91d3fb" stroke-width="2"/></svg></button>
    <button class="cell" title="Dynamic UCS"><svg viewBox="0 0 22 22"><path d="M3 3v16h16M3 19l10-9" fill="none" stroke="#bbb" stroke-width="2"/><use href="#bolt"/></svg></button>
    <button class="cell" title="Isolate Entities"><svg viewBox="0 0 22 22"><circle cx="6" cy="5" r="5" fill="#bbb"/><path d="M1 13h9v8H1zM20 9v11l-9-5z" fill="#bbb"/></svg></button>
    <button class="cell last" title="Status"><svg viewBox="0 0 22 22"><circle cx="11" cy="10" r="8" fill="#55b64f" stroke="#b8e5ae"/><path d="M7 10l3 3 6-6" fill="none" stroke="#fff" stroke-width="2.500"/></svg></button>
  </footer>

  <!-- Site watermark laid over the whole window -->
  <svg class="watermark" aria-hidden="true">
    <defs>
      <pattern id="mark" x="16" y="6" width="89" height="79" patternUnits="userSpaceOnUse">
        <text class="marktext" transform="translate(44 40) rotate(-40)" x="0" y="5">闪电下载吧</text>
      </pattern>
    </defs>
    <rect width="100%" height="100%" fill="url(#mark)"/>
  </svg>
  <div class="sitelogo" aria-hidden="true">
    <svg viewBox="0 0 50 52"><path d="M0 0h25a26 26 0 0 1 0 52H0z" fill="#1fa3e6"/><path d="M35 3L8 18v12l11 3-6 19 26-27-13-5z" fill="#e3e3e3"/></svg>
    <p><strong>闪电下载吧</strong><span>www.sdbeta.com</span></p>
  </div>
</body>
</html>
```

FILE: styles.css
```css
/* General */
* {
  margin: 0;
  padding: 0;
  box-sizing: border-box;
}

body {
  display: flex;
  flex-direction: column;
  height: 100vh;
  overflow: hidden;
  background: #535353;
  color: #fff;
  font-family: "Open Sans", "Noto Sans", sans-serif;
  font-size: 11px;
}

button {
  display: flex;
  align-items: center;
  justify-content: center;
  border: none;
  background: none;
  color: inherit;
  font: inherit;
}

svg {
  display: block;
}

.sprite {
  position: absolute;
  width: 0;
  height: 0;
}

/* Title bar */
.titlebar {
  display: flex;
  align-items: center;
  height: 23px;
  padding-left: 3px;
  background: #fff;
  color: #000;
}

.titlebar h1 {
  flex: 1;
  margin-left: 4px;
  font-size: 13px;
  font-weight: normal;
}

.app-icon {
  width: 16px;
  height: 16px;
}

.win {
  width: 46px;
  height: 20px;
  align-self: flex-start;
}

.win svg {
  width: 12px;
  height: 12px;
  fill: none;
  stroke: #000;
}

/* Menu */
.menubar {
  display: flex;
  align-items: center;
  gap: 21px;
  height: 22px;
  margin-bottom: 1px;
  padding-left: 19px;
}

.menubar a {
  color: #fff;
  text-decoration: none;
}

/* Toolbars */
.toolrow {
  display: flex;
  height: 28px;
}

.toolbar {
  position: relative;
  display: flex;
  align-items: center;
  padding: 0 12px 0 10px;
  background: #5f5f5f;
}

.toolbar::before {
  content: "";
  position: absolute;
  left: 4px;
  top: 6px;
  width: 4px;
  height: 16px;
  background: repeating-conic-gradient(#ddd 0 25%, #222 0 50%) 0 0 / 2px 2px;
}

.toolbar button {
  justify-content: flex-start;
  width: 23px;
  height: 22px;
  padding-left: 3px;
}

.toolbar svg {
  width: 16px;
  height: 16px;
}

.sep {
  width: 8px;
  height: 14px;
  background: linear-gradient(#fff, #fff) 4px 0 / 1px 14px no-repeat;
}

.toolbar.vertical {
  flex-direction: column;
  align-items: flex-start;
  width: 29px;
  padding: 9px 0 12px 4px;
}

.toolbar.vertical::before {
  left: 7px;
  top: 4px;
  width: 16px;
  height: 4px;
}

.toolbar.vertical + .vertical {
  margin-top: 1px;
  padding-bottom: 8px;
}

.node {
  fill: #e8f1ff;
  stroke: #4e94f5;
}

.toolbar button.pdf3d {
  flex-direction: column;
  align-items: flex-start;
  justify-content: center;
  font-size: 8px;
  line-height: 8px;
}

.pdf3d span {
  color: #8db8ff;
}

/* Combo boxes */
.combo {
  display: flex;
  align-items: center;
  height: 22px;
  margin: 2px 2px 0;
  background: #fff;
  color: #000;
}

.combo.small {
  width: 96px;
}

.combo.large {
  width: 196px;
}

.combo select {
  flex: 1;
  min-width: 0;
  height: 22px;
  padding-left: 1px;
  border: 1px solid #fff;
  border-radius: 0;
  appearance: none;
  background:
    linear-gradient(45deg, transparent 50%, #fff 50%) right 7px top 9px / 3px 3px no-repeat,
    linear-gradient(-45deg, transparent 50%, #fff 50%) right 4px top 9px / 3px 3px no-repeat,
    linear-gradient(#aeb4bf, #959ba6) right / 14px 100% no-repeat;
  background-color: #fff;
  color: #000;
  font-family: "Liberation Mono", monospace;
  font-size: 10px;
}

.layer-state {
  display: flex;
  gap: 1px;
  margin-left: 3px;
}

.swatch {
  width: 86px;
  height: 12px;
  margin-left: 7px;
  border: 1px solid #000;
}

.line {
  width: 86px;
  height: 1px;
  margin-left: 7px;
  background: #000;
}

.layer-state + select,
.swatch + select,
.line + select {
  padding-left: 3px;
}

/* Workspace */
.workspace {
  display: flex;
  flex: 1;
  min-height: 0;
}

.side {
  width: 32px;
}

.side.right {
  padding-left: 3px;
}

.document {
  display: flex;
  flex: 1;
  flex-direction: column;
  min-width: 0;
  padding-bottom: 3px;
}

.doctabs {
  display: flex;
  align-items: flex-end;
  justify-content: space-between;
  height: 22px;
}

.doctab {
  display: flex;
  align-items: center;
  gap: 8px;
  height: 20px;
  padding: 0 5px 0 3px;
  border: 1px solid #ddd;
  border-width: 1px 1px 0 2px;
  background: linear-gradient(#777, #575757);
  font-weight: bold;
}

.doctab span {
  padding-bottom: 2px;
}

.doctab svg {
  width: 8px;
  height: 8px;
}

.tabscroll {
  display: flex;
  gap: 12px;
  padding: 0 5px 6px 0;
}

.tabscroll svg {
  width: 6px;
  height: 10px;
  fill: none;
  stroke: #ddd;
}

.canvas {
  position: relative;
  flex: 1;
  min-height: 0;
  background: #20272f;
}

.drawing {
  width: 100%;
  height: 100%;
}

.minor {
  stroke: #262d37;
}

.major {
  stroke: #363d4c;
}

.axis-y {
  stroke: #159015;
}

.axis-x {
  stroke: #d00000;
}

.ucs {
  fill: none;
  stroke: #fff;
  shape-rendering: crispEdges;
}

.viewlabel {
  position: absolute;
  left: 11px;
  top: 4px;
  font-family: "Noto Sans", sans-serif;
  font-size: 12px;
}

/* Layout tabs */
.layouts {
  display: flex;
  height: 17px;
  border-top: 1px solid #fff;
  background: #efefef;
  color: #000;
  font-family: "Liberation Mono", monospace;
}

.layoutnav {
  display: flex;
  margin-right: 4px;
}

.layoutnav button {
  width: 16px;
  height: 16px;
  border: 1px solid #999;
  border-width: 0 2px 1px 0;
  background: #fff;
}

.layoutnav svg {
  width: 10px;
  height: 10px;
  stroke: #000;
  stroke-width: 1px;
}

.slant {
  width: 10px;
  height: 16px;
  fill: none;
  stroke: #000;
}

.layout {
  height: 16px;
  padding: 0 5px;
  border-bottom: 1px solid #888;
  font-size: 10px;
}

.layout.active {
  padding: 0 1px;
  background: #fff;
  font-size: 12px;
  font-weight: bold;
}

/* Command line */
.command {
  display: flex;
  height: 51px;
  margin-top: 4px;
}

.command-tools {
  display: flex;
  flex-direction: column;
  gap: 10px;
  width: 20px;
  padding-top: 5px;
}

.command-tools button {
  width: 20px;
  height: 10px;
}

.command-tools svg {
  width: 10px;
  height: 10px;
}

.command-box {
  display: flex;
  flex: 1;
  flex-direction: column;
  border: 2px solid #8f8f8f;
  border-width: 2px 1px 1px 2px;
}

.history {
  display: flex;
  justify-content: flex-end;
  height: 29px;
  background: #e4e4e4;
  border-bottom: 1px solid #999;
}

.scroller {
  display: flex;
  flex-direction: column;
  justify-content: space-around;
  width: 17px;
  background: #f0f0f0;
  border-left: 1px solid #fff;
}

.scroller svg {
  width: 8px;
  height: 8px;
  fill: none;
  stroke: #bbb;
  stroke-width: 2px;
}

.scroller button {
  width: 100%;
}

.command input {
  flex: 1;
  min-height: 0;
  padding: 0 4px;
  border: none;
  border-bottom: 1px solid #ddd;
  background: #fff;
  color: #000;
  outline: none;
}

/* Status bar */
.statusbar {
  display: flex;
  justify-content: flex-end;
  height: 26px;
  border-top: 1px solid #ccc;
  border-bottom: 1px solid #000;
  background: #5c5c5c;
}

.cell {
  display: flex;
  align-items: center;
  justify-content: center;
  width: 30px;
  border-left: 1px solid #aaa;
}

.cell svg {
  width: 21px;
  height: 22px;
}

.cell.narrow {
  width: 9px;
}

.cell.coords {
  width: 39px;
}

.cell.scale {
  gap: 5px;
  width: 49px;
  padding-left: 5px;
}

.cell.model {
  width: 44px;
}

.cell.last {
  width: 23px;
}

/* Watermark */
.watermark {
  position: fixed;
  left: 0;
  top: 0;
  width: 100%;
  height: 100%;
  pointer-events: none;
}

.marktext {
  fill: #808080;
  fill-opacity: .24;
  font-family: "Noto Sans CJK SC", sans-serif;
  font-size: 13px;
  font-weight: 500;
  text-anchor: middle;
}

.sitelogo {
  position: fixed;
  left: 38px;
  top: 15px;
  display: flex;
  gap: 8px;
  color: #1fa3e6;
  opacity: .75;
  pointer-events: none;
}

.sitelogo svg {
  width: 50px;
  height: 52px;
}

.sitelogo p {
  display: flex;
  flex-direction: column;
  padding-top: 9px;
  font-family: "Noto Sans CJK SC", sans-serif;
}

.sitelogo strong {
  font-size: 30px;
  line-height: 28px;
  font-weight: 500;
}

.sitelogo span {
  font-family: "Open Sans", sans-serif;
  font-size: 20px;
  line-height: 16px;
}
```
